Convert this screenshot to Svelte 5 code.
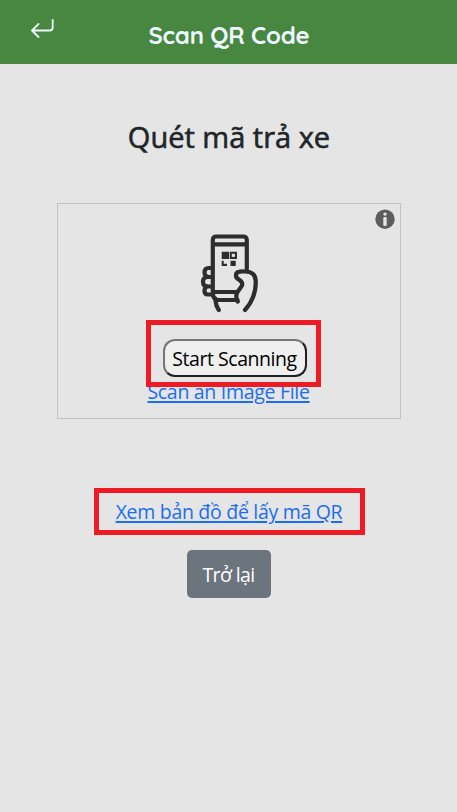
<script>
  const title = 'Scan QR Code';
</script>

<main>
  <header>
    <button class="back" aria-label="Back">
      <svg width="26" height="22" viewBox="0 0 26 22"><path d="M22.700 1.800V9.500Q22.700 12.500 19.700 12.500H2M8.500 6L2 12.500L8.500 19" /></svg>
    </button>
    <h1><span>{title}</span></h1>
  </header>

  <h2><span>Quét mã trả xe</span></h2>

  <section class="reader">
    <svg class="info" width="20" height="20" viewBox="0 0 20 20">
      <circle cx="10" cy="10.200" r="9.700" fill="#5d5d5d" />
      <circle cx="10" cy="5.100" r="1.700" fill="#e5e5e5" />
      <rect x="8.300" y="8" width="3.400" height="8.900" rx="1.200" fill="#e5e5e5" />
    </svg>
    <svg class="phone" width="58" height="79" viewBox="0 0 58 79">
      <g fill="none" stroke="#2d2d2d" stroke-width="4.200" stroke-linecap="round" stroke-linejoin="round">
        <path d="M46.800 35V6Q46.800 2.500 43.300 2.500H16.300Q12.800 2.500 12.800 6V60Q12.800 64 17 66H37.500M12.800 10.400H46.800M12.800 58H36" />
        <path d="M11.500 34H8.500Q4.500 34 4.500 38.500Q4.500 43 9 43H11M8 43Q3 43 3 47.700Q3 52.500 8 52.500H11M7 52.500Q4.500 53.500 4.500 57Q4.500 60.500 8 60.500H12" />
        <path d="M15.500 67Q16 72 18.800 76M45 76Q55.800 64 55.800 48Q55.800 37.500 45 37.500Q36 36.800 36 41Q35.500 44 39.500 46Q43 48.500 42 51.500Q40.500 54 37.500 58Q35 62 37.700 67.500" />
      </g>
      <path fill="#2d2d2d" d="M21.700 17.700h7.300v7.300h-7.300zM29.700 17.700h7.300v7.300h-7.300zM30.500 26.700h5.200v5.200h-5.200zM21.700 26.700h2v3h3.300v2.200h-5.300z" />
      <rect x="31.800" y="19.800" width="3.100" height="3.100" fill="#e5e5e5" />
    </svg>
    <button class="start"><span>Start Scanning</span></button>
    <a class="file" href="#file">Scan an Image File</a>
    <div class="mark"></div>
  </section>

  <div class="map"><a href="#map">Xem bản đồ để lấy mã QR</a></div>
  <button class="return"><span>Trở lại</span></button>
</main>

<style>
  :global(body) { margin: 0; background: #e5e5e5; }
  main {
    height: 812px;
    box-sizing: border-box;
    display: flex;
    flex-direction: column;
    align-items: center;
    overflow: hidden;
    background: #e5e5e5;
    color: #212529;
    font-family: "Segoe UI", "Open Sans", "Noto Sans", sans-serif;
  }
  header {
    width: 100%;
    height: 64px;
    flex: none;
    display: grid;
    grid-template-columns: 60px 1fr 60px;
    background: #478740;
  }
  button { font-family: inherit; }
  span, a { white-space: nowrap; }
  .back { padding: 18px 0 0 30px; border: 0; background: none; display: flex; align-items: flex-start; }
  .back svg { fill: none; stroke: #f0f8ff; stroke-width: 1.8; stroke-linecap: round; stroke-linejoin: round; flex: none; }
  h1 {
    margin: 0;
    padding: 5px 0 0 1px;
    text-align: center;
    color: #f0f8ff;
    font: 700 24px/60px Quicksand, Lato, sans-serif;
    letter-spacing: -0.2px;
  }
  h2 {
    margin: 53px 0 0 1px;
    height: 40px;
    line-height: 40px;
    font-size: 29px;
    font-weight: 500;
    letter-spacing: 0;
    -webkit-text-stroke: 0.6px #212529;
  }
  .reader {
    position: relative;
    box-sizing: border-box;
    width: 344px;
    height: 216px;
    margin-top: 46px;
    flex: none;
    border: 1px solid #c3c3c3;
    display: flex;
    flex-direction: column;
    align-items: center;
  }
  .info { position: absolute; top: 5px; right: 5px; }
  .phone { margin-top: 30px; flex: none; }
  .start {
    box-sizing: border-box;
    width: 144px;
    height: 38px;
    margin: 26px 0 0 12px;
    padding: 1px 0 0;
    flex: none;
    border: 2px solid;
    border-color: #767676 #212121 #212121 #767676;
    border-radius: 12px;
    background: #efefef;
    color: #000;
    font-size: 19.5px;
    line-height: 34px;
    letter-spacing: -0.45px;
  }
  a { color: #1b6ef3; font-size: 19.5px; letter-spacing: -0.3px; text-decoration: underline; text-decoration-thickness: 2px; text-underline-offset: 2px; }
  .file { line-height: 28px; margin-top: 1px; }
  .mark {
    position: absolute;
    left: 88px;
    top: 116px;
    box-sizing: border-box;
    width: 175px;
    height: 67px;
    border: 5px solid #ed1c24;
  }
  .map {
    box-sizing: border-box;
    width: 271px;
    height: 47px;
    margin-top: 69px;
    margin-left: 1px;
    flex: none;
    border: 5px solid #ed1c24;
    text-align: center;
    line-height: 38px;
  }
  .return {
    width: 84px;
    height: 48px;
    margin-top: 15px;
    padding: 1px 0 0;
    flex: none;
    border: 0;
    border-radius: 5px;
    background: #6c757d;
    color: #fff;
    font-size: 19.5px;
    letter-spacing: -0.6px;
  }
</style>
